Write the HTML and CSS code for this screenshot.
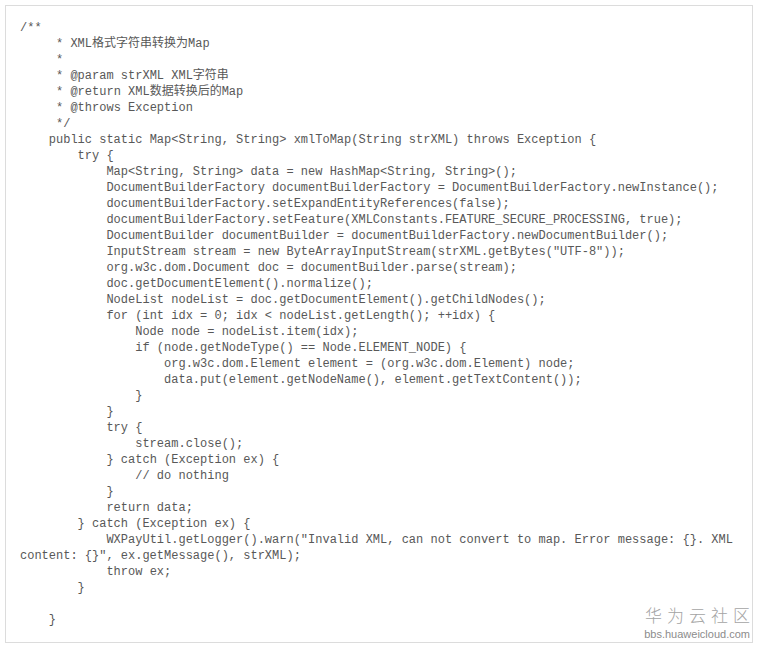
FILE: index.html
```html
<!DOCTYPE html>
<html lang="zh-CN">
<head>
<meta charset="utf-8">
<title>xmlToMap</title>
<link rel="stylesheet" href="styles.css">
</head>
<body>
<div class="page">
<div class="code-box">
<pre class="code">/**
     * XML格式字符串转换为Map
     *
     * @param strXML XML字符串
     * @return XML数据转换后的Map
     * @throws Exception
     */
    public static Map&lt;String, String&gt; xmlToMap(String strXML) throws Exception {
        try {
            Map&lt;String, String&gt; data = new HashMap&lt;String, String&gt;();
            DocumentBuilderFactory documentBuilderFactory = DocumentBuilderFactory.newInstance();
            documentBuilderFactory.setExpandEntityReferences(false);
            documentBuilderFactory.setFeature(XMLConstants.FEATURE_SECURE_PROCESSING, true);
            DocumentBuilder documentBuilder = documentBuilderFactory.newDocumentBuilder();
            InputStream stream = new ByteArrayInputStream(strXML.getBytes("UTF-8"));
            org.w3c.dom.Document doc = documentBuilder.parse(stream);
            doc.getDocumentElement().normalize();
            NodeList nodeList = doc.getDocumentElement().getChildNodes();
            for (int idx = 0; idx &lt; nodeList.getLength(); ++idx) {
                Node node = nodeList.item(idx);
                if (node.getNodeType() == Node.ELEMENT_NODE) {
                    org.w3c.dom.Element element = (org.w3c.dom.Element) node;
                    data.put(element.getNodeName(), element.getTextContent());
                }
            }
            try {
                stream.close();
            } catch (Exception ex) {
                // do nothing
            }
            return data;
        } catch (Exception ex) {
            WXPayUtil.getLogger().warn("Invalid XML, can not convert to map. Error message: {}. XML content: {}", ex.getMessage(), strXML);
            throw ex;
        }

    }</pre>
<div class="watermark">
<div class="wm-title">华为云社区</div>
<div class="wm-url">bbs.huaweicloud.com</div>
</div>
</div>
</div>
</body>
</html>
```
FILE: styles.css
```css
html, body {
  margin: 0;
  padding: 0;
  background: #ffffff;
}

.page {
  padding: 5px 11px 6px 5px;
}

.code-box {
  position: relative;
  border: 1px solid #dcdcdc;
  background: #ffffff;
  padding: 14px 14px 14px 14px;
}

.code {
  margin: 0;
  font-family: "Liberation Mono", "Courier New", "Noto Sans CJK SC", monospace;
  font-size: 12px;
  line-height: 16px;
  color: #585858;
  white-space: pre-wrap;
  word-wrap: break-word;
}

.watermark {
  position: absolute;
  right: 2px;
  bottom: 2px;
  display: flex;
  flex-direction: column;
  align-items: flex-end;
  gap: 4px;
  font-family: "Liberation Sans", Arial, "Noto Sans CJK SC", sans-serif;
}

.wm-title {
  font-family: "Noto Sans CJK SC", sans-serif;
  font-size: 17px;
  line-height: 18px;
  letter-spacing: 5px;
  margin-right: -5px;
  color: #a4a4a4;
  font-weight: 300;
}

.wm-url {
  font-size: 11px;
  line-height: 12px;
  color: #8c8c8c;
}
```
